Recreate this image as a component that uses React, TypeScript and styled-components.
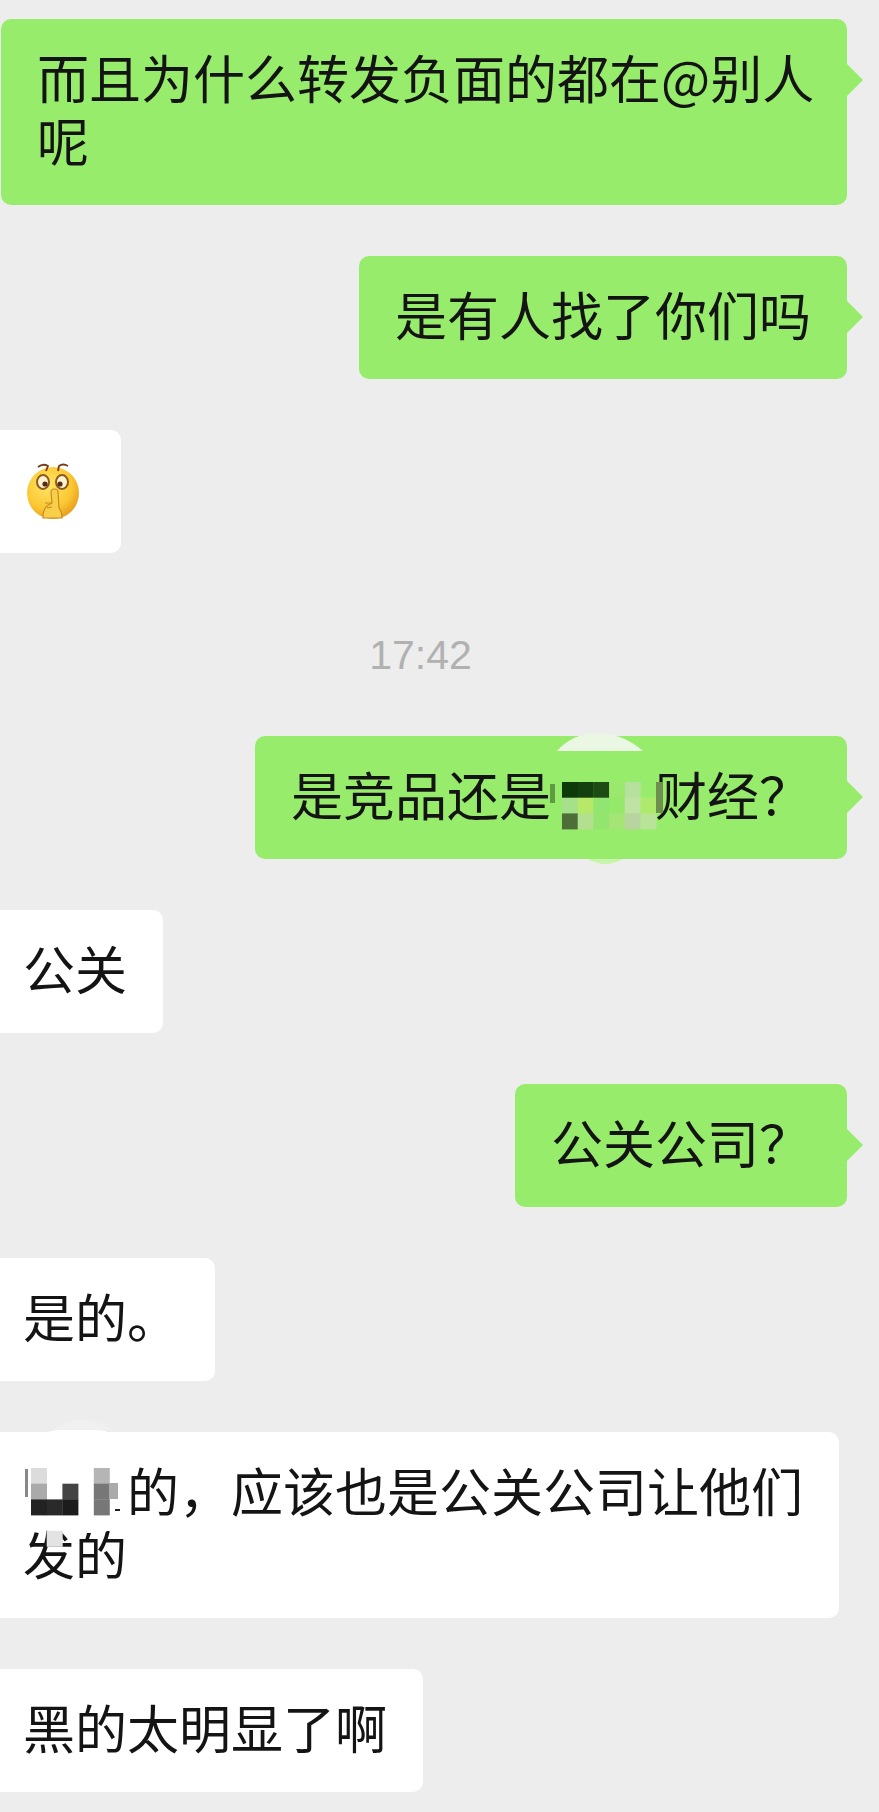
import React from 'react'
import styled, { createGlobalStyle } from 'styled-components'

const GlobalStyle = createGlobalStyle`
  html, body {
    margin: 0;
    background: #ededed;
  }
  body {
    overflow-x: hidden;
  }
`

const Chat = styled.div`
  width: 879px;
  height: 1812px;
  box-sizing: border-box;
  padding-top: 19px;
  display: flex;
  flex-direction: column;
  gap: 51px;
  overflow: hidden;
  background: #ededed;
  font-family: 'Noto Sans CJK SC', 'Liberation Sans', sans-serif;
`

const Row = styled.div<{ $mine?: boolean }>`
  display: flex;
  justify-content: ${({ $mine }) => ($mine ? 'flex-end' : 'flex-start')};
  padding-right: ${({ $mine }) => ($mine ? '32px' : '0')};
  margin-left: ${({ $mine }) => ($mine ? '0' : '-13px')};
`

const Bubble = styled.div<{ $mine?: boolean; $width?: number }>`
  position: relative;
  box-sizing: border-box;
  flex: none;
  width: ${({ $width }) => ($width ? `${$width}px` : 'auto')};
  padding: 26px 36px 34px;
  border-radius: 10px;
  background: ${({ $mine }) => ($mine ? '#98ec6c' : '#ffffff')};
  color: #141414;
  font-size: 52px;
  line-height: 63px;
  white-space: nowrap;

  ${({ $mine }) =>
    $mine &&
    `&::after {
      content: '';
      position: absolute;
      top: 44px;
      right: -16px;
      width: 17px;
      height: 34px;
      background: #98ec6c;
      clip-path: polygon(0 0, 100% 50%, 0 100%);
    }`}
`

const Time = styled.div`
  height: 54px;
  padding: 27px 38px 0 0;
  text-align: center;
  color: #b1b1b1;
  font-family: 'Liberation Sans', sans-serif;
  font-size: 41px;
  line-height: 48px;
`

const Hidden = styled.span`
  display: inline-block;
  position: relative;
  width: 2em;
  height: 1em;
`

const Patch = styled.svg`
  position: absolute;
  overflow: visible;
`

const GreenPatch = styled(Patch)`
  left: -16px;
  top: -27px;
`

const WhitePatch = styled(Patch)`
  left: -12px;
  top: -39px;
`

const EmojiBox = styled.span`
  display: inline-block;
  width: 62px;
  height: 63px;
  vertical-align: top;
`

const cell = 15.7

type Cell = [number, number, string]

const greenCells: Cell[] = [
  [0, 0, '#0d3a08'], [1, 0, '#143f0e'], [2, 0, '#1e4a14'], [3, 0, '#9be86e'], [4, 0, '#b5e19c'],
  [0, 1, '#a5e08b'], [1, 1, '#b7e868'], [2, 1, '#90e670'], [3, 1, '#94e86a'], [4, 1, '#bfe3a5'], [5, 1, '#b0ea6c'],
  [0, 2, '#4e6e37'], [1, 2, '#b3e08e'], [2, 2, '#93e570'], [3, 2, '#a4e575'], [4, 2, '#b8d5a0'], [5, 2, '#b9e498'],
]

const whiteCells: Cell[] = [
  [0, 0, '#dcdcdc'], [4, 0, '#b5b5b5'],
  [0, 1, '#aaaaaa'], [2, 1, '#444444'], [4, 1, '#777777'],
  [0, 2, '#222222'], [1, 2, '#2a2a2a'], [2, 2, '#1c1c1c'], [4, 2, '#777777'],
  [1, 4, '#e3e3e3'],
]

const Cells = ({ cells, x, y }: { cells: Cell[]; x: number; y: number }) => (
  <>
    {cells.map(([cx, cy, fill]) => (
      <rect key={`${cx}-${cy}`} x={x + cx * cell} y={y + cy * cell} width={cell + 0.3} height={cell + 0.3} fill={fill} />
    ))}
  </>
)

// 打码 over the green bubble, its edge pokes out at the top and bottom
const GreenMosaic = () => (
  <GreenPatch width="160" height="140" viewBox="0 0 160 140">
    <rect x="20" y="0" width="99" height="122" fill="#98ec6c" />
    <path d="M22 14 Q40 -6 68 -3 Q90 -2 108 14 Z" fill="#eaf7e3" />
    <path d="M53 122 Q70 132 88 122 Z" fill="#c6f5ab" />
    <Cells cells={greenCells} x={27} y={45} />
    <rect x="121" y="45" width="7" height="31" fill="#6f8f4f" />
    <rect x="15" y="47" width="5" height="19" fill="#2f5a20" opacity="0.55" />
  </GreenPatch>
)

const WhiteMosaic = () => (
  <WhitePatch width="150" height="160" viewBox="0 0 150 160">
    <rect x="18" y="9" width="98" height="103" rx="30" fill="#ffffff" />
    <path d="M42 9 Q72 -12 102 9 Z" fill="#f0f0f0" />
    <Cells cells={whiteCells} x={20} y={47} />
    <rect x="98" y="62" width="9" height="16" fill="#aaaaaa" />
    <rect x="14" y="48" width="3" height="28" fill="#555555" opacity="0.7" />
    <rect x="104" y="88" width="5" height="2" fill="#222222" />
  </WhitePatch>
)

const ShushEmoji = () => (
  <EmojiBox>
    <svg width="63" height="63" viewBox="0 0 63 63" fill="none">
      <defs>
        <radialGradient id="face" cx="0.4" cy="0.35" r="0.7">
          <stop offset="0" stopColor="#ffe468" />
          <stop offset="0.65" stopColor="#fbc832" />
          <stop offset="1" stopColor="#e89a1c" />
        </radialGradient>
      </defs>
      <circle cx="30" cy="37" r="26" fill="url(#face)" />
      <path d="M15 11 Q20 7 25 10 L23 15" stroke="#7a3a1a" strokeWidth="1.8" />
      <path d="M45 10 Q40 7 36 10 L35 15" stroke="#7a3a1a" strokeWidth="1.8" />
      <ellipse cx="20" cy="26" rx="6" ry="7" fill="#fff3d0" stroke="#8a5a20" strokeWidth="2" />
      <ellipse cx="39" cy="26" rx="6" ry="7" fill="#fff3d0" stroke="#8a5a20" strokeWidth="2" />
      <circle cx="22" cy="28" r="2.6" fill="#5a2a12" />
      <circle cx="37" cy="28" r="2.6" fill="#5a2a12" />
      <path
        d="M20 62 Q20 53 24 50 L29 47 L28 36 Q28 33 31.5 33 Q35 33 35 36 L36 52 Q39 56 39 62 Z"
        fill="#f9cf4a"
        stroke="#c98a24"
        strokeWidth="1.2"
      />
      <path d="M22 47 L28 47 M24 52 L29 51" stroke="#c98a24" strokeWidth="1.2" />
    </svg>
  </EmojiBox>
)

export default function App() {
  return (
    <>
      <GlobalStyle />
      <Chat>
        <Row $mine>
          <Bubble $mine $width={846}>
            而且为什么转发负面的都在@别人
            <br />呢
          </Bubble>
        </Row>
        <Row $mine>
          <Bubble $mine>是有人找了你们吗</Bubble>
        </Row>
        <Row>
          <Bubble>
            <ShushEmoji />
          </Bubble>
        </Row>
        <Time>17:42</Time>
        <Row $mine>
          <Bubble $mine>
            是竞品还是
            <Hidden>
              <GreenMosaic />
            </Hidden>
            财经？
          </Bubble>
        </Row>
        <Row>
          <Bubble>公关</Bubble>
        </Row>
        <Row $mine>
          <Bubble $mine>公关公司？</Bubble>
        </Row>
        <Row>
          <Bubble>是的。</Bubble>
        </Row>
        <Row>
          <Bubble $width={852}>
            <Hidden>
              <WhiteMosaic />
            </Hidden>
            的，应该也是公关公司让他们
            <br />发的
          </Bubble>
        </Row>
        <Row>
          <Bubble>黑的太明显了啊</Bubble>
        </Row>
      </Chat>
    </>
  )
}
